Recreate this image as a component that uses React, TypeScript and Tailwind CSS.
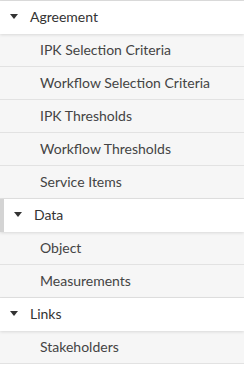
const sections = [
  {
    title: "Agreement",
    items: [
      "IPK Selection Criteria",
      "Workflow Selection Criteria",
      "IPK Thresholds",
      "Workflow Thresholds",
      "Service Items",
    ],
  },
  { title: "Data", items: ["Object", "Measurements"], active: true },
  { title: "Links", items: ["Stakeholders"] },
];

function Caret() {
  return (
    <svg width="8" height="5" viewBox="0 0 8 5" className="shrink-0">
      <path d="M0 0h8L4 5z" fill="#333" />
    </svg>
  );
}

export default function App() {
  return (
    <div className="w-[244px] h-[365px] bg-white border-t border-[#dedede] font-['Lato',sans-serif] text-[14px]">
      {sections.map((s) => (
        <div key={s.title}>
          <div
            className={`relative h-[33px] flex items-center gap-[12px] pl-[10px] pb-[2px] bg-white text-[#333] shadow-[0_1px_3px_rgba(0,0,0,0.12)] z-10 ${
              s.active ? "border-l-[4px] border-[#d4d4d4] pl-[6px]" : ""
            }`}
          >
            <Caret />
            <span>{s.title}</span>
          </div>
          {s.items.map((item) => (
            <div
              key={item}
              className="h-[33px] flex items-center pl-[40px] pb-[2px] bg-[#f6f6f6] border-b border-[#e2e2e2] text-[#444]"
            >
              {item}
            </div>
          ))}
        </div>
      ))}
    </div>
  );
}
